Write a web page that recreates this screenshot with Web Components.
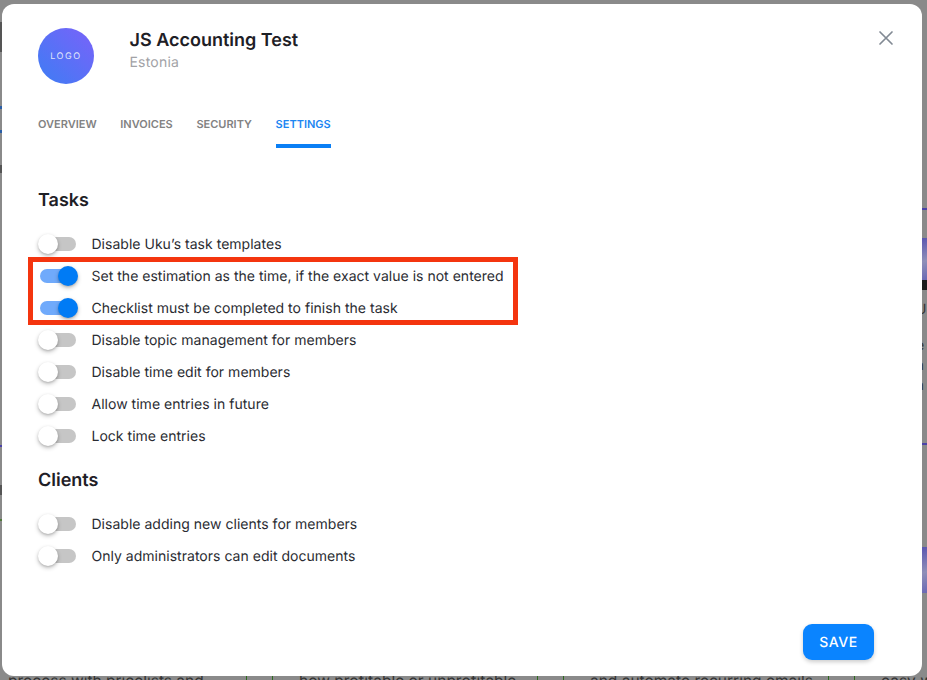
<!DOCTYPE html>
<html lang="en">
<head>
<meta charset="utf-8">
<title>JS Accounting Test</title>
<style>
    html, body {
        margin: 0;
        padding: 0;
        height: 100%;
        overflow: hidden;
        background: #8a8a8a;
        font-family: Inter, 'Noto Sans', sans-serif;
        text-rendering: geometricPrecision;
    }
</style>
</head>
<body>
<page-backdrop></page-backdrop>
<settings-modal>
    <company-header slot="header" name="JS Accounting Test" country="Estonia"></company-header>
    <tab-bar slot="tabs" items="Overview,Invoices,Security,Settings" active="Settings"></tab-bar>
    <settings-section title="Tasks">
        <toggle-row text="Disable Uku’s task templates"></toggle-row>
        <toggle-row text="Set the estimation as the time, if the exact value is not entered" checked></toggle-row>
        <toggle-row text="Checklist must be completed to finish the task" checked></toggle-row>
        <toggle-row text="Disable topic management for members"></toggle-row>
        <toggle-row text="Disable time edit for members"></toggle-row>
        <toggle-row text="Allow time entries in future"></toggle-row>
        <toggle-row text="Lock time entries"></toggle-row>
    </settings-section>
    <settings-section title="Clients">
        <toggle-row text="Disable adding new clients for members"></toggle-row>
        <toggle-row text="Only administrators can edit documents"></toggle-row>
    </settings-section>
    <save-button slot="footer" text="Save"></save-button>
</settings-modal>
<script>
class PageBackdrop extends HTMLElement {
    constructor() {
        super()
        this.shadow = this.attachShadow({ mode: 'open' })
        this.render()
    }

    render() {
        const lines = () => `<i class="rule"></i><i class="rule"></i>`
        this.shadow.innerHTML = /*html*/ `
            <style>
                :host {
                    display: flex;
                    flex-direction: column;
                    height: 680px;
                    overflow: hidden;
                    color: #333;
                    font-family: Inter, sans-serif;
                }
                .edges {
                    flex: 1;
                    display: flex;
                    justify-content: space-between;
                    overflow: hidden;
                }
                .left { width: 2px; overflow: hidden; display: flex; flex-direction: column; }
                .right { width: 5px; overflow: hidden; display: flex; flex-direction: column; }
                .left b, .right b { display: block; flex: none; }
                .blue { background: #2a5ea6; }
                .dark { background: #555; }
                .violet { background: #4b42a8; }
                .green { background: #4f7a3a; }
                .blob { background: linear-gradient(160deg, #5a55b0, #8f8fb8 55%, #6a68b4); }
                .night { background: #1c1c1c; }
                .right span { display: block; flex: none; height: 20px; font-size: 14px; line-height: 20px; margin-left: -6px; white-space: nowrap; }
                .bottom {
                    flex: none;
                    height: 4px;
                    overflow: hidden;
                    display: grid;
                    grid-template-columns: repeat(4, 291px);
                    padding-left: 8px;
                    font-size: 15.5px;
                    line-height: 9px;
                    white-space: nowrap;
                }
                .col { display: flex; }
                .col p { margin: 0; width: 238px; }
                .rule { flex: none; width: 1px; height: 4px; background: #2f6a1f; margin-right: 25px; }
            </style>
            <div class="edges">
                <div class="left">
                    <b style="height:22px"></b><b class="dark" style="height:30px"></b>
                    <b style="height:54px"></b><b class="blue" style="height:3px"></b>
                    <b style="height:21px"></b><b class="blue" style="height:3px"></b>
                    <b style="height:32px"></b><b class="dark" style="height:8px"></b>
                    <b style="height:272px"></b><b class="violet" style="height:2px"></b>
                    <b style="height:38px"></b><b class="dark" style="height:10px"></b>
                    <b style="height:24px"></b><b class="green" style="height:2px"></b>
                </div>
                <div class="right">
                    <b style="height:208px"></b><b class="violet" style="height:2px"></b>
                    <b style="height:28px"></b><b class="blob" style="height:42px"></b>
                    <b class="night" style="height:10px"></b>
                    <b style="height:10px"></b><span>U</span>
                    <b style="height:16px"></b><span>e</span><span>a</span><span>a</span>
                    <b style="height:47px"></b><b class="violet" style="height:2px"></b>
                    <b style="height:102px"></b><b class="blob" style="height:46px"></b>
                </div>
            </div>
            <div class="bottom">
                <div class="col"><p>process with pricelists and</p>${lines()}</div>
                <div class="col"><p>how profitable or unprofitable.</p>${lines()}</div>
                <div class="col"><p>and automate recurring emails</p>${lines()}</div>
                <div class="col"><p>easy way</p></div>
            </div>
        `
    }
}

class SettingsModal extends HTMLElement {
    constructor() {
        super()
        this.shadow = this.attachShadow({ mode: 'open' })
        this.render()
    }

    render() {
        this.shadow.innerHTML = /*html*/ `
            <style>
                :host {
                    position: absolute;
                    left: 2px;
                    top: 4px;
                    width: 920px;
                    height: 672px;
                    box-sizing: border-box;
                    display: flex;
                    flex-direction: column;
                    padding: 24px 36px 16px;
                    background: #fff;
                    border-radius: 12px;
                    font-family: Inter, sans-serif;
                }
                .tabs { display: block; margin-top: 26px; }
                .body { flex: 1; display: flex; flex-direction: column; gap: 16px; margin-top: 40px; }
                .footer { display: flex; justify-content: flex-end; padding-right: 12px; }
                .marker {
                    position: absolute;
                    left: 26px;
                    top: 253px;
                    width: 490px;
                    height: 68px;
                    box-sizing: border-box;
                    border: 5px solid #f4350f;
                    pointer-events: none;
                }
            </style>
            <slot name="header"></slot>
            <div class="tabs"><slot name="tabs"></slot></div>
            <div class="body"><slot></slot></div>
            <div class="footer"><slot name="footer"></slot></div>
            <div class="marker"></div>
        `
    }
}

class CompanyHeader extends HTMLElement {
    constructor() {
        super()
        this.name_ = this.getAttribute('name') || ''
        this.country = this.getAttribute('country') || ''
        this.shadow = this.attachShadow({ mode: 'open' })
        this.render()
    }

    render() {
        this.shadow.innerHTML = /*html*/ `
            <style>
                :host { display: flex; align-items: flex-start; }
                .logo {
                    flex: none;
                    box-sizing: border-box;
                    width: 56px;
                    height: 56px;
                    padding-top: 1px;
                    border-radius: 50%;
                    background: linear-gradient(225deg, #7a62f9 0%, #3d7df4 100%);
                    color: #dfe3fb;
                    display: flex;
                    align-items: center;
                    justify-content: center;
                    font-size: 9px;
                    letter-spacing: 1.6px;
                }
                .info { margin-left: 35.5px; padding-top: 1px; flex: 1; }
                h1 { margin: 0; font-size: 18px; line-height: 24px; font-weight: 600; color: #1e2026; }
                p { margin: 1px 0 0; font-size: 14px; line-height: 18px; color: #a2a2a6; letter-spacing: .2px; }
                button { flex: none; border: none; background: none; padding: 0; margin: 2px -8px 0 0; width: 16px; height: 16px; cursor: pointer; }
                svg { display: block; width: 16px; height: 16px; }
            </style>
            <div class="logo">LOGO</div>
            <div class="info">
                <h1>${this.name_}</h1>
                <p>${this.country}</p>
            </div>
            <button aria-label="Close">
                <svg viewBox="0 0 16 16" fill="none" stroke="#828a94" stroke-width="1.7" stroke-linecap="round">
                    <path d="M2 2l12 12M14 2L2 14"/>
                </svg>
            </button>
        `
    }
}

class TabBar extends HTMLElement {
    constructor() {
        super()
        this.items = (this.getAttribute('items') || '').split(',')
        this.active = this.getAttribute('active')
        this.shadow = this.attachShadow({ mode: 'open' })
        this.render()
    }

    render() {
        this.shadow.innerHTML = /*html*/ `
            <style>
                :host { display: flex; gap: 23.7px; }
                a {
                    display: block;
                    height: 38px;
                    box-sizing: border-box;
                    border-bottom: 4px solid transparent;
                    font-size: 11px;
                    line-height: 28px;
                    font-weight: 600;
                    text-transform: uppercase;
                    color: #828282;
                    cursor: pointer;
                }
                a.on { color: #1c86f2; border-bottom-color: #0a7ff5; }
            </style>
            ${this.items.map(t => `<a class="${t === this.active ? 'on' : ''}">${t}</a>`).join('')}
        `
    }
}

class SettingsSection extends HTMLElement {
    constructor() {
        super()
        this.shadow = this.attachShadow({ mode: 'open' })
        this.shadow.innerHTML = /*html*/ `
            <style>
                :host { display: block; }
                h2 { margin: 0 0 15px; padding-top: 1px; font-size: 18px; line-height: 24px; font-weight: 600; color: #1e2026; }
                .rows { display: flex; flex-direction: column; }
            </style>
            <h2>${this.getAttribute('title')}</h2>
            <div class="rows"><slot></slot></div>
        `
    }
}

class ToggleRow extends HTMLElement {
    constructor() {
        super()
        this.text = this.getAttribute('text') || ''
        this.shadow = this.attachShadow({ mode: 'open' })
        this.render()
    }

    render() {
        this.shadow.innerHTML = /*html*/ `
            <style>
                :host { display: flex; align-items: center; height: 32px; }
                .switch { flex: none; width: 36px; height: 14px; margin: 0 15.5px 0 2px; border-radius: 7px; background: #c6c6c6; display: flex; align-items: center; }
                .knob {
                    flex: none;
                    width: 20px;
                    height: 20px;
                    margin-left: -2px;
                    border-radius: 50%;
                    background: #fff;
                    box-shadow: 0 2px 4px rgb(0 0 0 / 0.25), 0 1px 2px rgb(0 0 0 / 0.12);
                }
                :host([checked]) .switch { background: #70aafb; }
                :host([checked]) .knob { background: #007bf5; margin-left: 18px; }
                span { padding-top: 2px; font-size: 14px; line-height: 20px; color: #2a2c32; letter-spacing: .02px; white-space: nowrap; }
            </style>
            <div class="switch"><div class="knob"></div></div>
            <span>${this.text}</span>
        `
    }
}

class SaveButton extends HTMLElement {
    constructor() {
        super()
        this.text = this.getAttribute('text') || 'Save'
        this.shadow = this.attachShadow({ mode: 'open' })
        this.render()
    }

    render() {
        this.shadow.innerHTML = /*html*/ `
            <style>
                :host { display: block; }
                button {
                    display: block;
                    width: 71px;
                    height: 36px;
                    border: none;
                    border-radius: 9px;
                    background: #0a84ff;
                    color: #fff;
                    font-family: Inter, sans-serif;
                    font-size: 14px;
                    font-weight: 500;
                    letter-spacing: .5px;
                    text-transform: uppercase;
                    text-rendering: geometricPrecision;
                    box-shadow: 0 2px 4px rgb(0 0 0 / 0.2);
                    cursor: pointer;
                }
            </style>
            <button>${this.text}</button>
        `
    }
}

customElements.define('page-backdrop', PageBackdrop)
customElements.define('settings-modal', SettingsModal)
customElements.define('company-header', CompanyHeader)
customElements.define('tab-bar', TabBar)
customElements.define('settings-section', SettingsSection)
customElements.define('toggle-row', ToggleRow)
customElements.define('save-button', SaveButton)
</script>
</body>
</html>
